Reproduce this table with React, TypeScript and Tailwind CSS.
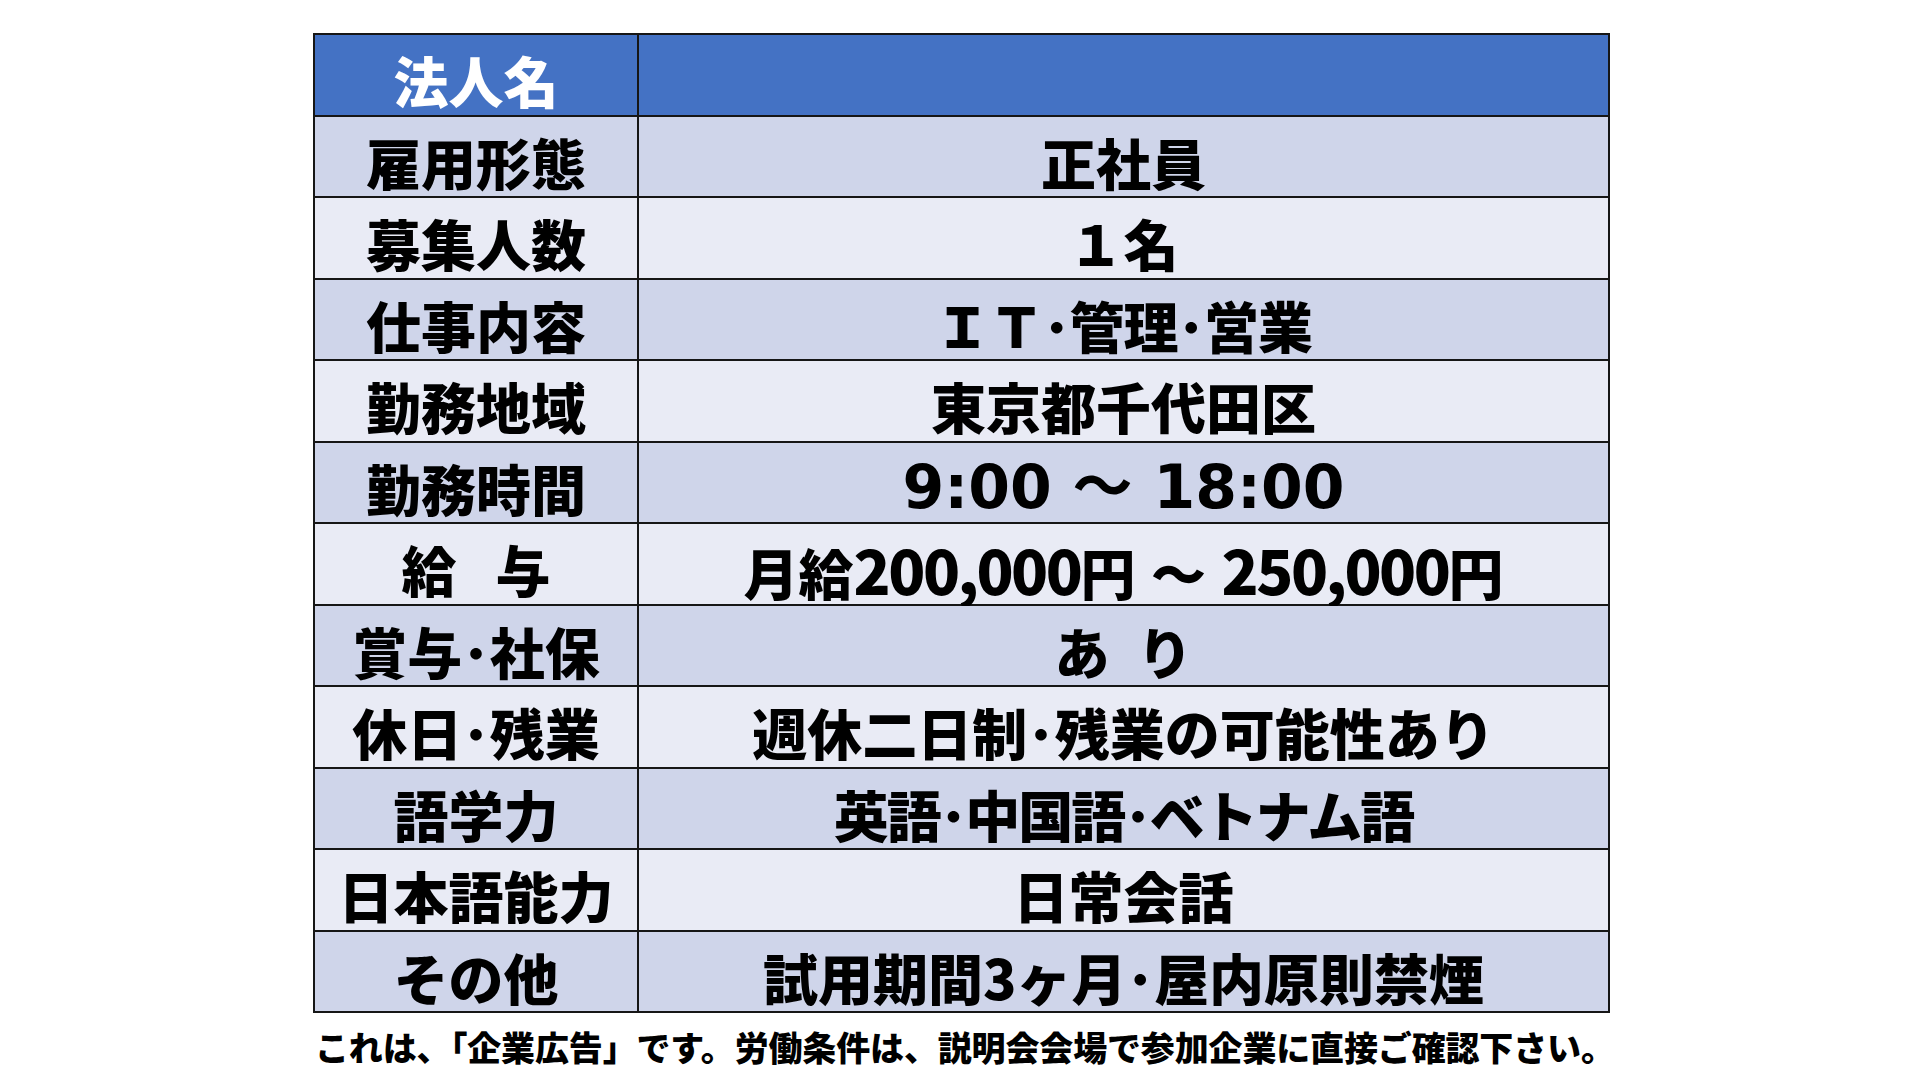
import React from "react";

type Row = { label: React.ReactNode; value: React.ReactNode };

const rows: Row[] = [
  { label: "雇用形態", value: "正社員" },
  { label: "募集人数", value: "１名" },
  { label: "仕事内容", value: <span className="tracking-[-1px]">ＩＴ･管理･営業</span> },
  { label: "勤務地域", value: "東京都千代田区" },
  {
    label: "勤務時間",
    value: (
      <span className="font-['DejaVu_Sans','Noto_Sans_CJK_JP',sans-serif] font-bold text-[60px]">
        9:00 ～ 18:00
      </span>
    ),
  },
  {
    label: (
      <>
        給<span className="text-[39px]">　</span>与
      </>
    ),
    value: (
      <span className="[word-spacing:3px]">
        月給<span className="text-[61px] tracking-[-2.5px]">200,000</span>円 ～{" "}
        <span className="text-[61px] tracking-[-2.5px]">250,000</span>円
      </span>
    ),
  },
  {
    label: "賞与･社保",
    value: (
      <>
        あ<span className="text-[28px]">　</span>り
      </>
    ),
  },
  { label: "休日･残業", value: "週休二日制･残業の可能性あり" },
  { label: "語学力", value: <span className="tracking-[-2px]">英語･中国語･ベトナム語</span> },
  { label: "日本語能力", value: "日常会話" },
  { label: "その他", value: "試用期間3ヶ月･屋内原則禁煙" },
];

export default function App() {
  return (
    <div className="w-[1920px] h-[1080px] bg-white overflow-hidden font-['Noto_Sans_CJK_JP',sans-serif]">
      <div className="ml-[313px] pt-[33px] w-[1297px]">
        <div className="grid grid-cols-[322px_1fr] grid-rows-[repeat(12,minmax(0,1fr))] gap-[2px] p-[2px] bg-[#161616] h-[980px]">
          <div className="bg-[#4472C4] flex items-center justify-center pt-[10px] leading-none text-[55px] font-black text-white">
            法人名
          </div>
          <div className="bg-[#4472C4]" />
          {rows.map((r, i) => {
            const dark = i % 2 === 0;
            return (
              <React.Fragment key={i}>
                <div
                  className={
                    (dark ? "bg-[#CFD5EA]" : "bg-[#E9EBF5]") +
                    " flex items-center justify-center pt-[10px] leading-none text-[55px] font-black text-black whitespace-nowrap"
                  }
                >
                  {r.label}
                </div>
                <div
                  className={
                    (dark ? "bg-[#CFD5EA]" : "bg-[#E9EBF5]") +
                    " flex items-center justify-center pt-[10px] leading-none text-[55px] font-black text-black whitespace-nowrap"
                  }
                >
                  {r.value}
                </div>
              </React.Fragment>
            );
          })}
        </div>
        <div className="mt-[17px] ml-[2px] leading-none text-[34px] font-black text-black tracking-[-0.15px] whitespace-nowrap">
          これは、「企業広告」です。労働条件は、説明会会場で参加企業に直接ご確認下さい。
        </div>
      </div>
    </div>
  );
}
